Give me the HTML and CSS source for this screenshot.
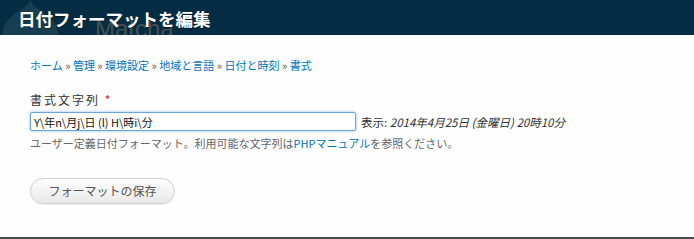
FILE: index.html
```
<!DOCTYPE html>
<html lang="ja">
<head>
    <meta charset="UTF-8">
    <title>日付フォーマットを編集</title>
    <link rel="stylesheet" href="styles.css">
</head>
<body>
    <div class="header">
        <svg class="header-drop" width="64" height="35" viewBox="0 0 64 35">
            <path d="M30 0 C34 8 44 12 52 20 C62 30 60 46 46 54 C36 60 20 60 10 52 C-2 42 0 26 12 16 C20 10 28 6 30 0 Z" fill="rgba(255,255,255,0.08)"/>
        </svg>
        <span class="header-site">Matcha</span>
        <h1>日付フォーマットを編集</h1>
    </div>

    <div class="page">
        <div class="breadcrumb">
            <a href="#">ホーム</a> <span class="sep">»</span>
            <a href="#">管理</a> <span class="sep">»</span>
            <a href="#">環境設定</a> <span class="sep">»</span>
            <a href="#">地域と言語</a> <span class="sep">»</span>
            <a href="#">日付と時刻</a> <span class="sep">»</span>
            <a href="#">書式</a>
        </div>

        <form class="format-form">
            <div class="form-item">
                <label for="dateFormat">書式文字列 <span class="required">*</span></label>
                <div class="field-row">
                    <input type="text" id="dateFormat" value="Y\年n\月j\日 (l) H\時i\分">
                    <span class="preview">表示: <em>2014年4月25日 (金曜日) 20時10分</em></span>
                </div>
                <div class="description">
                    ユーザー定義日付フォーマット。利用可能な文字列は<a href="#">PHPマニュアル</a>を参照ください。
                </div>
            </div>

            <div class="form-actions">
                <button type="submit" class="btn">フォーマットの保存</button>
            </div>
        </form>
    </div>
</body>
</html>
```

FILE: styles.css
```
body {
    margin: 0;
    font-family: "Noto Sans CJK JP", "Liberation Sans", sans-serif;
    background-color: #fefefe;
    color: #333;
}

a {
    color: #0074bd;
    text-decoration: none;
}

.header {
    position: relative;
    height: 35px;
    overflow: hidden;
    background-color: #042d43;
}

.header-drop {
    position: absolute;
    left: 0;
    top: 0;
}

.header-site {
    position: absolute;
    left: 95px;
    top: 15px;
    font-family: "Liberation Sans", Arial, sans-serif;
    font-size: 24px;
    line-height: 28px;
    color: #4a4f53;
}

.header h1 {
    position: relative;
    margin: 0;
    padding: 7px 0 0 18px;
    font-size: 17.5px;
    line-height: 24px;
    font-weight: 700;
    color: #fff;
    text-shadow: 0 1px 1px rgba(0, 0, 0, 0.4);
}

.page {
    height: 204px;
    box-sizing: border-box;
    padding: 22px 30px 0 30px;
    border-bottom: 2px solid #4a4a4a;
}

.breadcrumb {
    font-size: 11px;
    line-height: 16px;
}

.breadcrumb .sep {
    color: #6b4a2a;
}

.format-form {
    margin-top: 19px;
}

.form-item label {
    display: block;
    margin-bottom: 4px;
    font-size: 12px;
    line-height: 16px;
    letter-spacing: 2px;
    color: #333;
}

.required {
    color: #e0202a;
}

.field-row {
    display: flex;
    align-items: center;
}

.field-row input[type="text"] {
    width: 326px;
    height: 19px;
    box-sizing: border-box;
    margin: 0;
    padding: 0 3px;
    border: 1px solid #6aa5dc;
    border-radius: 2px;
    box-shadow: 0 0 3px rgba(90, 160, 230, 0.7);
    font-family: "Noto Sans CJK JP", "Liberation Sans", sans-serif;
    font-size: 11px;
    color: #111;
}

.preview {
    margin-left: 5px;
    font-size: 11.5px;
    color: #333;
}

.preview em {
    font-style: italic;
}

.description {
    margin-top: 4px;
    font-size: 11px;
    line-height: 16px;
    color: #666;
}

.form-actions {
    margin-top: 26px;
}

.btn {
    width: 145px;
    height: 26px;
    padding: 0;
    border: 1px solid #d2d2d2;
    border-radius: 13px;
    background: linear-gradient(#fdfdfd, #e9e9e9);
    box-shadow: 0 1px 1px rgba(0, 0, 0, 0.08);
    font-family: "Noto Sans CJK JP", "Liberation Sans", sans-serif;
    font-size: 12px;
    color: #555;
    cursor: pointer;
}
```
